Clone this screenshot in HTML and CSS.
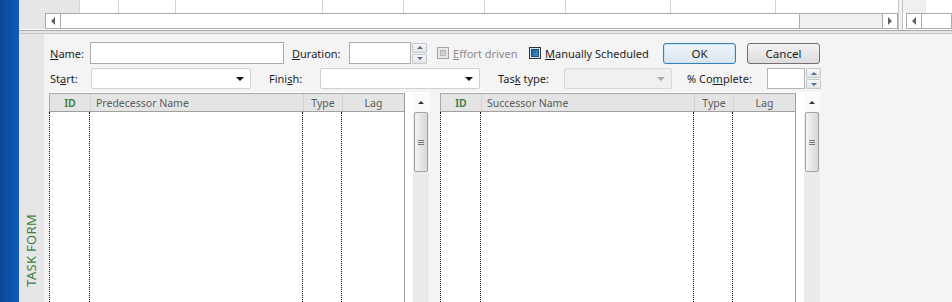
FILE: index.html
```html
<!DOCTYPE html>
<html lang="en">
<head>
    <meta charset="UTF-8">
    <title>Task Form</title>
    <link rel="stylesheet" href="styles.css">
</head>
<body>
<div class="app">
    <div class="ribbon"></div>
    <div class="workspace">
        <!-- view above the form -->
        <div class="top-view">
            <div class="view-left">
                <div class="grid-row">
                    <div class="row-head"></div>
                    <div class="grid-cols">
                        <span></span><span></span><span></span><span></span><span></span>
                        <span></span><span></span><span></span><span></span>
                    </div>
                </div>
                <div class="hscroll-row">
                    <div class="hs-pad"></div>
                    <div class="hbtn"><i class="arr-l"></i></div>
                    <div class="hthumb"></div>
                    <div class="htrack"></div>
                    <div class="hbtn"><i class="arr-r"></i></div>
                </div>
            </div>
            <div class="view-split"></div>
            <div class="view-right">
                <div class="grid-row">
                    <div class="row-head-r"></div>
                    <div class="grid-blank"></div>
                </div>
                <div class="hscroll-row">
                    <div class="hs-pad-r"></div>
                    <div class="hbtn"><i class="arr-l"></i></div>
                    <div class="hthumb wide"></div>
                </div>
            </div>
        </div>
        <div class="splitter"></div>

        <div class="form-area">
            <div class="side-tab"><span>TASK FORM</span></div>
            <div class="form">
                <div class="form-row row-one">
                    <label class="lbl l-name"><u>N</u>ame:</label>
                    <input class="field f-name" type="text">
                    <label class="lbl l-dur"><u>D</u>uration:</label>
                    <input class="field f-dur" type="text">
                    <div class="spin">
                        <span class="spin-btn"><i class="tri-up"></i></span>
                        <span class="spin-btn"><i class="tri-down"></i></span>
                    </div>
                    <div class="check check-off">
                        <span class="box"><span></span></span>
                        <span class="check-text"><u>E</u>ffort driven</span>
                    </div>
                    <div class="check check-on">
                        <span class="box"><span></span></span>
                        <span class="check-text"><u>M</u>anually Scheduled</span>
                    </div>
                    <button class="btn btn-ok">OK</button>
                    <button class="btn btn-cancel">Cancel</button>
                </div>

                <div class="form-row row-two">
                    <label class="lbl l-start">St<u>a</u>rt:</label>
                    <div class="combo c-start"><i class="caret"></i></div>
                    <label class="lbl l-finish">Fini<u>s</u>h:</label>
                    <div class="combo c-finish"><i class="caret"></i></div>
                    <label class="lbl l-type">Tas<u>k</u> type:</label>
                    <div class="combo c-type disabled"><i class="caret"></i></div>
                    <label class="lbl l-pct">% Co<u>m</u>plete:</label>
                    <input class="field f-pct" type="text">
                    <div class="spin">
                        <span class="spin-btn"><i class="tri-up"></i></span>
                        <span class="spin-btn"><i class="tri-down"></i></span>
                    </div>
                </div>

                <div class="tables">
                    <div class="pane">
                        <div class="tbl">
                            <div class="tbl-head">
                                <span class="h-id">ID</span>
                                <span class="h-name">Predecessor Name</span>
                                <span class="h-mid">Type</span>
                                <span class="h-mid">Lag</span>
                            </div>
                            <div class="tbl-body">
                                <span></span><span></span><span></span><span></span>
                            </div>
                        </div>
                        <div class="pane-gap"></div>
                        <div class="vscroll">
                            <div class="vbtn"><i class="arr-up"></i></div>
                            <div class="vthumb"><i></i><i></i><i></i></div>
                        </div>
                    </div>
                    <div class="pane">
                        <div class="tbl">
                            <div class="tbl-head">
                                <span class="h-id">ID</span>
                                <span class="h-name">Successor Name</span>
                                <span class="h-mid">Type</span>
                                <span class="h-mid">Lag</span>
                            </div>
                            <div class="tbl-body">
                                <span></span><span></span><span></span><span></span>
                            </div>
                        </div>
                        <div class="pane-gap"></div>
                        <div class="vscroll">
                            <div class="vbtn"><i class="arr-up"></i></div>
                            <div class="vthumb"><i></i><i></i><i></i></div>
                        </div>
                    </div>
                </div>
            </div>
        </div>
    </div>
</div>
</body>
</html>
```

FILE: styles.css
```css
* { box-sizing: border-box; }
body { margin: 0; width: 952px; height: 302px; overflow: hidden; font-family: "Noto Sans", sans-serif; font-size: 11px; color: #1e1e1e; background: #f4f4f4; }
.app { display: flex; height: 302px; }
.ribbon { width: 19px; background: linear-gradient(to right, #0a4795, #0f5cbd); }
.workspace { flex: 1; display: flex; flex-direction: column; }

/* view above */
.top-view { display: flex; height: 30px; background: #fff; }
.view-left { width: 879px; display: flex; flex-direction: column; }
.view-split { width: 5px; border-left: 1px solid #c4c4c4; border-right: 1px solid #c4c4c4; background: #f2f2f2; }
.view-right { flex: 1; display: flex; flex-direction: column; }
.grid-row { display: flex; height: 13px; }
.row-head { width: 60px; background: #e6e6e6; }
.row-head-r { width: 23px; background: #f0f0f0; }
.grid-blank { flex: 1; background: #fff; }
.grid-cols { flex: 1; display: grid; grid-template-columns: 39px 57px 147px 81px 81px 81px 105px 105px 1fr; }
.grid-cols span { border-left: 1px solid #d4d4d4; }

.hscroll-row { display: flex; height: 16px; }
.hs-pad { width: 26px; background: #e6e6e6; }
.hs-pad-r { width: 3px; background: #fff; }
.hbtn { width: 16px; height: 16px; border: 1px solid #ababab; background: #fff; display: flex; align-items: center; justify-content: center; }
.hthumb { width: 739px; border: 1px solid #ababab; border-left: none; background: #fff; }
.hthumb.wide { flex: 1; width: auto; }
.htrack { flex: 1; background: #f0f0f0; border-top: 1px solid #ababab; border-bottom: 1px solid #ababab; }
.arr-l { width: 0; height: 0; border-top: 4px solid transparent; border-bottom: 4px solid transparent; border-right: 4px solid #606060; }
.arr-r { width: 0; height: 0; border-top: 4px solid transparent; border-bottom: 4px solid transparent; border-left: 4px solid #606060; }

.splitter { height: 4px; border-top: 1px solid #a9a9a9; border-bottom: 1px solid #c6c6c6; background: #e4e4e4; }

/* form */
.form-area { flex: 1; display: flex; min-height: 0; }
.side-tab { width: 25px; background: #e6e6e6; display: flex; flex-direction: column; justify-content: flex-end; align-items: center; padding-bottom: 15px; }
.side-tab span { writing-mode: vertical-rl; transform: rotate(180deg); color: #3f7f3f; font-size: 13px; letter-spacing: 0.3px; line-height: 1; }
.form { flex: 1; background: #f4f4f4; padding: 8px 0 0 5px; overflow: hidden; }

.form-row { display: flex; align-items: center; margin-left: 1px; }
.row-one { height: 22px; }
.row-two { height: 21px; margin-top: 4px; }
.lbl { flex: none; white-space: nowrap; }
.l-name { width: 40px; }
.l-dur { width: 57px; margin-left: 8px; }
.l-start { width: 41px; }
.l-finish { width: 51px; margin-left: 18px; }
.l-type { width: 66px; margin-left: 18px; }
.l-pct { width: 80px; margin-left: 15px; }

.field { height: 22px; border: 1px solid #ababab; background: #fff; padding: 0; margin: 0; font: inherit; flex: none; }
.f-name { width: 194px; }
.f-dur { width: 62px; }
.f-pct { width: 38px; height: 21px; border-color: #b4b4b4; }

.spin { width: 15px; height: 21px; margin-left: 1px; display: flex; flex-direction: column; gap: 1px; flex: none; }
.spin-btn { flex: 1; border: 1px solid #c4c8cc; border-radius: 1px; background: linear-gradient(#f6f6f6, #e4e4e4); display: flex; align-items: center; justify-content: center; }
.tri-up { width: 0; height: 0; border-left: 3px solid transparent; border-right: 3px solid transparent; border-bottom: 3px solid #4e6e94; }
.tri-down { width: 0; height: 0; border-left: 3px solid transparent; border-right: 3px solid transparent; border-top: 3px solid #4e6e94; }

.check { display: flex; align-items: center; flex: none; }
.check .box { width: 12px; height: 12px; border: 1px solid #8e8e8e; background: #fff; padding: 2px; margin-right: 4px; }
.check .box span { display: block; width: 100%; height: 100%; }
.check-off { width: 92px; margin-left: 10px; color: #8c8c8c; }
.check-off .box { border-color: #a4a4a4; background: #e8e8e8; }
.check-off .box span { background: linear-gradient(135deg, #c6c6c6, #dedede); border: 1px solid #b4b4b4; }
.check-on { width: 134px; }
.check-on .box { border-color: #333; background: #dbe9f4; padding: 1px; }
.check-on .box span { background: linear-gradient(135deg, #1f5d93, #3c8fce); border: 1px solid #1b4f7e; }

.btn { width: 73px; height: 21px; margin-top: 1px; font: inherit; font-size: 11.5px; color: #1e1e1e; border: 1px solid #707070; border-radius: 3px; background: linear-gradient(#f2f2f2, #dcdcdc); padding: 0; flex: none; }
.btn-ok { border-color: #3c7fb1; box-shadow: inset 0 0 0 1px #c6e2f5; background: linear-gradient(#eef5fb, #dde6ee); }
.btn-cancel { margin-left: 11px; }

.combo { height: 21px; border: 1px solid #d0d0d0; border-radius: 2px; background: #fff; display: flex; align-items: center; justify-content: flex-end; padding-right: 6px; flex: none; }
.c-start { width: 160px; }
.c-finish { width: 160px; }
.c-type { width: 108px; }
.combo.disabled { background: #f0f0f0; border-color: #d9d9d9; }
.caret { width: 0; height: 0; border-left: 4px solid transparent; border-right: 4px solid transparent; border-top: 4px solid #111; }
.disabled .caret { border-top-color: #a8a8a8; }

/* predecessor / successor tables */
.tables { display: flex; gap: 10px; margin-top: 3px; height: 210px; }
.pane { width: 381px; display: flex; background: #fff; padding-top: 1px; }
.tbl { width: 356px; display: flex; flex-direction: column; border-right: 1px solid #9e9e9e; }
.tbl-head, .tbl-body { display: grid; grid-template-columns: 41px 213px 39px 62px; }
.tbl-head { height: 19px; background: #e4e4e4; border-top: 1px solid #a8a8a8; border-bottom: 1px solid #a0a0a0; font-size: 10.5px; color: #5c5c5c; }
.tbl-head span { display: flex; align-items: center; border-left: 1px solid #d2d2d2; white-space: nowrap; }
.tbl-head .h-id { border-left-color: #a8a8a8; justify-content: center; color: #3b7b3b; font-weight: 600; }
.h-name { padding-left: 5px; }
.h-mid { justify-content: center; }
.tbl-body { flex: 1; }
.tbl-body span { border-right: 1px dotted #111; }
.tbl-body span:first-child { border-left: 1px dotted #111; }
.tbl-body span:last-child { border-right: none; }

.pane-gap { width: 8px; }
.vscroll { width: 17px; display: flex; flex-direction: column; background: #ebebeb; border-right: 1px solid #f7f7f7; }
.vbtn { height: 19px; background: #fafafa; display: flex; align-items: center; justify-content: center; }
.arr-up { width: 0; height: 0; border-left: 3px solid transparent; border-right: 3px solid transparent; border-bottom: 3px solid #333; }
.vthumb { height: 60px; margin: 0 1px; border: 1px solid #a3a3a3; border-radius: 2px; background: linear-gradient(to right, #f4f4f4, #d8d8d8); display: flex; flex-direction: column; align-items: center; justify-content: center; gap: 1px; }
.vthumb i { width: 6px; height: 1px; background: #777; }
```
